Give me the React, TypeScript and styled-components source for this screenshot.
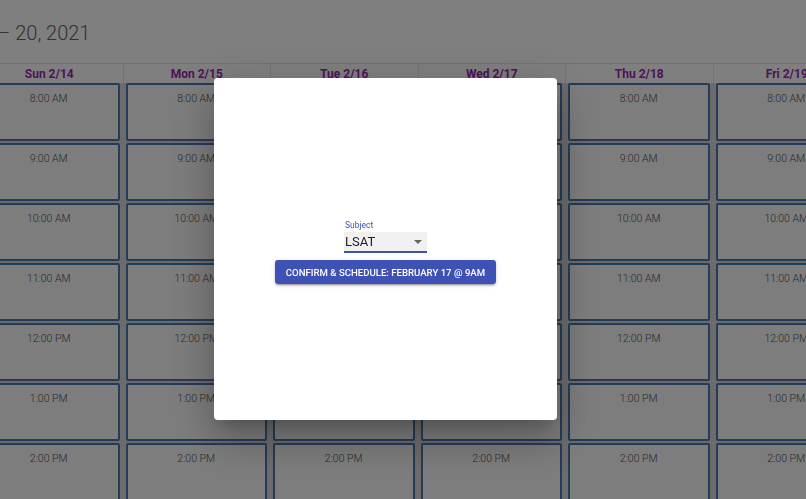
import React from "react";
import styled, { createGlobalStyle } from "styled-components";

const Global = createGlobalStyle`
  html, body { margin: 0; padding: 0; background: #fff; overflow: hidden; }
  body { font-family: Roboto, "Liberation Sans", sans-serif; }
`;

const Viewport = styled.div`
  width: 806px;
  height: 499px;
  overflow: hidden;
  position: relative;
`;

const Title = styled.h1`
  margin: 0 0 0 -112px;
  height: 63px;
  padding-top: 3px;
  box-sizing: border-box;
  display: flex;
  align-items: center;
  font-weight: 300;
  font-size: 20px;
  color: #666;
  white-space: nowrap;
`;

const Grid = styled.div`
  margin-left: -25px;
  display: grid;
  grid-template-columns: repeat(7, 147.5px);
  border-top: 1px solid #e6e6e6;
`;

const Column = styled.div`
  display: flex;
  flex-direction: column;
`;

const DayHeader = styled.div`
  height: 19px;
  padding-top: 1px;
  box-sizing: border-box;
  display: flex;
  align-items: center;
  justify-content: center;
  font-weight: 700;
  font-size: 12px;
  color: #9c27b0;
  background: #fff;
  border-left: 1px solid #e6e6e6;
`;

const Slots = styled.div`
  background: #d9d9d9;
  display: flex;
  flex-direction: column;
  gap: 2px;
  padding: 0 3px;
`;

const Slot = styled.div`
  height: 58px;
  box-sizing: border-box;
  border: 2px solid #4a78ae;
  border-radius: 2px;
  background: #fafafa;
  display: flex;
  justify-content: center;
  padding-top: 7px;
  font-size: 10.5px;
  font-weight: 300;
  line-height: 14px;
  color: #555;
`;

const Backdrop = styled.div`
  position: fixed;
  inset: 0;
  background: rgba(0, 0, 0, 0.5);
`;

const Dialog = styled.div`
  position: fixed;
  left: 214px;
  top: 78px;
  width: 343px;
  height: 342px;
  background: #fff;
  border-radius: 4px;
  box-shadow: 0 11px 15px -7px rgba(0,0,0,0.2), 0 24px 38px 3px rgba(0,0,0,0.14), 0 9px 46px 8px rgba(0,0,0,0.12);
  display: flex;
  flex-direction: column;
  align-items: center;
  justify-content: center;
  padding-top: 6px;
  box-sizing: border-box;
`;

const Field = styled.div`
  display: flex;
  flex-direction: column;
  width: 83px;
  margin-bottom: 7px;
`;

const Label = styled.label`
  font-size: 8.5px;
  color: #3f51b5;
  margin-left: 1px;
  margin-bottom: 2px;
  line-height: 10px;
`;

const Select = styled.div`
  height: 21px;
  box-sizing: border-box;
  background: #f0f0f0;
  border-bottom: 2px solid #3f51b5;
  display: flex;
  align-items: center;
  justify-content: space-between;
  padding: 0 5px 0 1px;
  font-size: 13px;
  color: #222;
`;

const Arrow = styled.span`
  width: 0;
  height: 0;
  border-left: 4px solid transparent;
  border-right: 4px solid transparent;
  border-top: 4px solid #666;
`;

const Button = styled.button`
  width: 221px;
  height: 24px;
  padding: 0;
  border: none;
  border-radius: 3px;
  background: #3f51b5;
  color: #fff;
  font-family: Roboto, "Liberation Sans", sans-serif;
  font-weight: 500;
  font-size: 9.6px;
  letter-spacing: 0;
  white-space: nowrap;
  text-transform: uppercase;
  box-shadow: 0 3px 1px -2px rgba(0,0,0,0.2), 0 2px 2px 0 rgba(0,0,0,0.14), 0 1px 5px 0 rgba(0,0,0,0.12);
  cursor: pointer;
`;

const days = ["Sun 2/14", "Mon 2/15", "Tue 2/16", "Wed 2/17", "Thu 2/18", "Fri 2/19", "Sat 2/20"];
const times = ["8:00 AM", "9:00 AM", "10:00 AM", "11:00 AM", "12:00 PM", "1:00 PM", "2:00 PM", "3:00 PM"];

export default function App() {
  return (
    <Viewport>
      <Global />
      <Title>February 14 – 20, 2021</Title>
      <Grid>
        {days.map((d) => (
          <Column key={d}>
            <DayHeader>{d}</DayHeader>
            <Slots>
              {times.map((t) => (
                <Slot key={t}>{t}</Slot>
              ))}
            </Slots>
          </Column>
        ))}
      </Grid>
      <Backdrop />
      <Dialog>
        <Field>
          <Label>Subject</Label>
          <Select>
            <span>LSAT</span>
            <Arrow />
          </Select>
        </Field>
        <Button>Confirm &amp; Schedule: February 17 @ 9AM</Button>
      </Dialog>
    </Viewport>
  );
}
